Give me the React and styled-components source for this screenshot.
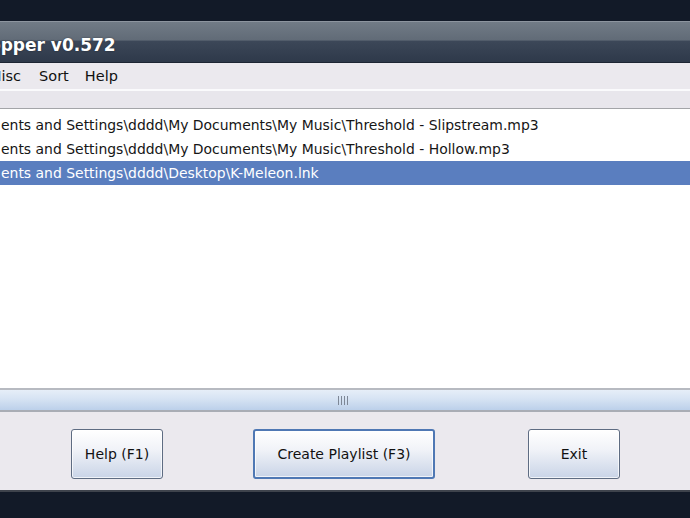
import React from "react";
import styled, { createGlobalStyle } from "styled-components";

const Global = createGlobalStyle`
  html, body {
    margin: 0;
    padding: 0;
    background: #121a28;
    overflow: hidden;
  }
  body {
    font-family: "DejaVu Sans", Verdana, sans-serif;
  }
`;

const Page = styled.div`
  width: 690px;
  height: 518px;
  display: flex;
  flex-direction: column;
  background: #121a28;
`;

const Desktop = styled.div`
  height: 21px;
  flex: none;
`;

const Window = styled.div`
  display: flex;
  flex-direction: column;
  background: #ebe9ee;
  border-bottom: 2px solid #3e434c;
`;

const TitleBar = styled.div`
  height: 40px;
  border-top: 1px solid #8d959f;
  background: linear-gradient(
    to bottom,
    #717b86 0%,
    #616b77 45%,
    #3c4758 48%,
    #2e394a 100%
  );
  border-bottom: 1px solid #1d2533;
  display: flex;
  align-items: center;
  overflow: hidden;
`;

const Title = styled.div`
  color: #fff;
  font-weight: bold;
  font-size: 17px;
  margin-left: -11px;
  padding-top: 5px;
  white-space: nowrap;
  text-shadow: 0 0 2px rgba(0, 0, 0, 0.4);
`;

const MenuBar = styled.div`
  height: 26px;
  display: flex;
  align-items: center;
  background: #ebe9ee;
  font-size: 14.5px;
  color: #111;
  overflow: hidden;
`;

const MenuItem = styled.span`
  margin-left: ${(p) => p.$offset}px;
  white-space: nowrap;
`;

const ToolStrip = styled.div`
  height: 17px;
  background: #e8e6ec;
  border-top: 2px solid #fafafc;
  border-bottom: 1px solid #a3a4a8;
`;

const List = styled.div`
  height: 279px;
  background: #fff;
  padding-top: 4px;
  box-sizing: border-box;
  overflow: hidden;
`;

const Row = styled.div`
  height: 24px;
  line-height: 24px;
  font-size: 13.95px;
  white-space: nowrap;
  padding-left: 1px;
  color: ${(p) => (p.$selected ? "#fff" : "#161616")};
  background: ${(p) => (p.$selected ? "#5a7ebf" : "transparent")};
`;

const HScroll = styled.div`
  height: 20px;
  border-top: 2px solid #b7bac1;
  border-bottom: 2px solid #a9adb5;
  background: linear-gradient(to bottom, #e6eef8 0%, #d6e3f3 45%, #bcd0ea 100%);
  display: flex;
  justify-content: center;
  align-items: center;
`;

const Grip = styled.div`
  display: flex;
  gap: 2px;
  margin-left: -4px;
  & > span {
    width: 1px;
    height: 9px;
    background: #7d8796;
  }
`;

const ButtonPanel = styled.div`
  height: 78px;
  display: flex;
  align-items: flex-start;
  padding: 17px 0 0 71px;
  box-sizing: border-box;
  gap: 90px;
`;

const Button = styled.button`
  width: ${(p) => p.$w}px;
  height: 50px;
  margin-left: ${(p) => p.$shift || 0}px;
  font-family: "DejaVu Sans", Verdana, sans-serif;
  font-size: 14px;
  color: #111;
  border-radius: 3px;
  border: ${(p) => (p.$default ? "2px solid #4f78b4" : "1px solid #5e6c82")};
  background: linear-gradient(to bottom, #ffffff 0%, #f1f3f8 40%, #c9d4e7 100%);
  box-shadow: inset 0 0 0 1px rgba(255, 255, 255, 0.7);
  padding: 0;
  flex: none;
`;

const rows = [
  "ents and Settings\\dddd\\My Documents\\My Music\\Threshold - Slipstream.mp3",
  "ents and Settings\\dddd\\My Documents\\My Music\\Threshold - Hollow.mp3",
  "ents and Settings\\dddd\\Desktop\\K-Meleon.lnk",
];

export default function App() {
  return (
    <>
      <Global />
      <Page>
        <Desktop />
        <Window>
          <TitleBar>
            <Title>opper v0.572</Title>
          </TitleBar>
          <MenuBar>
            <MenuItem $offset={-11}>Misc</MenuItem>
            <MenuItem $offset={18}>Sort</MenuItem>
            <MenuItem $offset={16}>Help</MenuItem>
          </MenuBar>
          <ToolStrip />
          <List>
            {rows.map((r, i) => (
              <Row key={i} $selected={i === 2}>
                {r}
              </Row>
            ))}
          </List>
          <HScroll>
            <Grip>
              <span />
              <span />
              <span />
              <span />
            </Grip>
          </HScroll>
          <ButtonPanel>
            <Button $w={92}>Help (F1)</Button>
            <Button $w={182} $default>
              Create Playlist (F3)
            </Button>
            <Button $w={92} $shift={3}>
              Exit
            </Button>
          </ButtonPanel>
        </Window>
      </Page>
    </>
  );
}
